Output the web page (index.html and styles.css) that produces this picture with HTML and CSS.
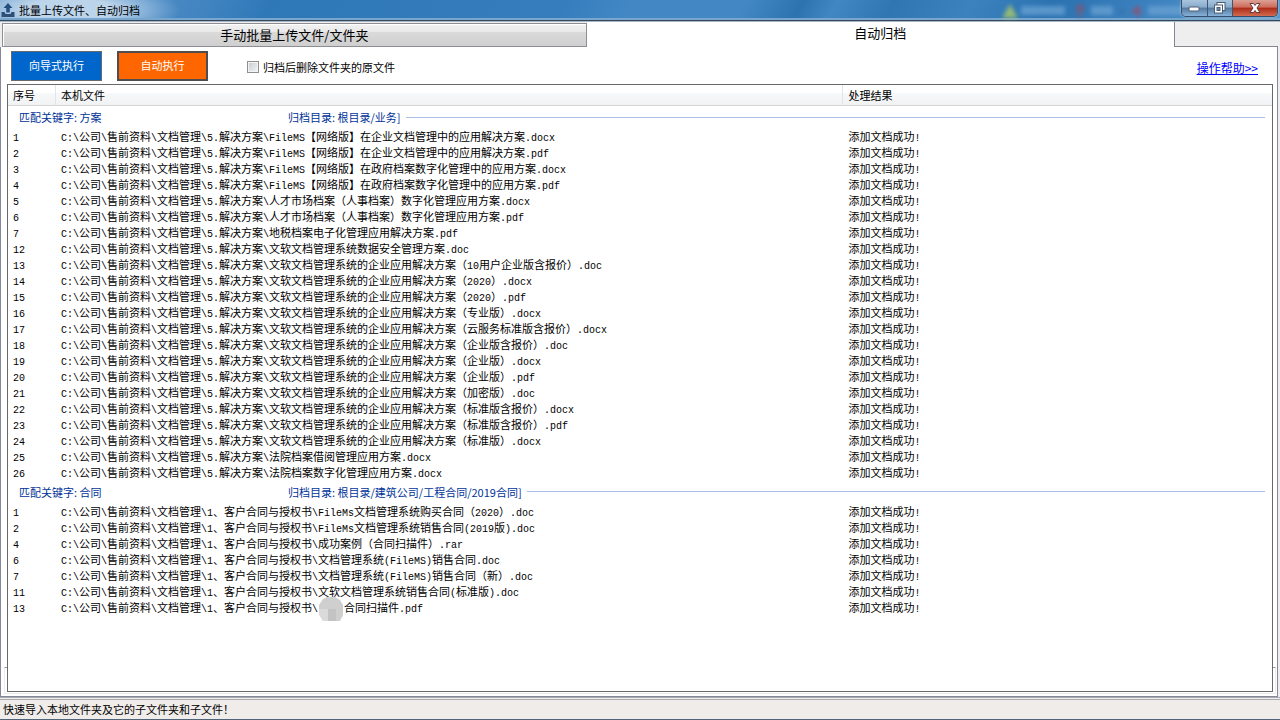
FILE: index.html
```html
<!DOCTYPE html>
<html lang="zh-CN">
<head>
<meta charset="utf-8">
<title>批量上传文件、自动归档</title>
<link rel="stylesheet" href="styles.css">
</head>
<body>
<header class="titlebar">
  <svg class="app-icon" width="16" height="16" viewBox="0 0 16 16" aria-hidden="true">
    <path d="M8 1 L12.5 6 H9.8 V10.5 H6.2 V6 H3.500 Z" fill="#24507f"/>
    <path d="M1.500 10 H4.500 L5.500 12 H10.500 L11.500 10 H14.500 V15 H1.500 Z" fill="#2d4f78"/>
  </svg>
  <h1 class="title">批量上传文件、自动归档</h1>
  <svg class="glass" width="190" height="20" viewBox="0 0 190 20" aria-hidden="true">
    <path d="M9 4 L17 18 H1 Z" fill="#b6cf62"/>
    <rect x="20" y="6" width="44" height="9" fill="#6aa2d2"/>
    <path d="M76 5 h7 v6 h-3 v6 h-3 v-6 h-2 z" fill="#8a526e"/>
    <rect x="90" y="6" width="22" height="9" fill="#6aa2d2"/>
    <rect x="118" y="10" width="6" height="3" fill="#3a6d9c"/>
    <path d="M130 11 l9 -6 v12 z" fill="#a04a62"/>
    <rect x="147" y="6" width="40" height="9" fill="#6aa2d2"/>
  </svg>
  <div class="window-buttons">
    <button class="win min" aria-label="最小化"><svg width="14" height="12" viewBox="0 0 14 12"><rect x="2" y="5" width="10" height="4" rx="1" fill="#fff" stroke="#4a5d74"/></svg></button>
    <button class="win max" aria-label="还原"><svg width="14" height="14" viewBox="0 0 14 14"><rect x="4" y="1.500" width="8" height="8" fill="#fff" stroke="#4a5d74"/><rect x="1.500" y="4" width="8" height="8" fill="#fff" stroke="#4a5d74"/><rect x="4" y="6.500" width="3" height="3" fill="#6a8bab" stroke="#4a5d74"/></svg></button>
    <button class="win close" aria-label="关闭"><svg width="14" height="12" viewBox="0 0 14 12"><path d="M2 1.500 H5.500 L7 3.500 L8.500 1.500 H12 L9 6 L12 10.500 H8.500 L7 8.500 L5.500 10.500 H2 L5 6 Z" fill="#fff" stroke="#65383c"/></svg></button>
  </div>
</header>

<nav class="tabs" role="tablist">
  <button class="tab" role="tab" aria-selected="false">手动批量上传文件/文件夹</button>
  <button class="tab active" role="tab" aria-selected="true">自动归档</button>
  <div class="tab-rest"></div>
</nav>

<main class="panel">
  <div class="toolbar">
    <button class="action blue">向导式执行</button>
    <button class="action orange">自动执行</button>
    <label class="check"><input type="checkbox"><span>归档后删除文件夹的原文件</span></label>
    <a class="help" href="#">操作帮助&gt;&gt;</a>
  </div>
  <div class="list">
    <table>
      <colgroup><col class="c-num"><col class="c-file"><col class="c-result"></colgroup>
      <thead><tr><th scope="col">序号</th><th scope="col">本机文件</th><th scope="col">处理结果</th></tr></thead>
      <tbody>
        <tr class="group"><th colspan="3" scope="rowgroup"><div class="group-line"><span class="key">匹配关键字: 方案</span><span>归档目录: 根目录/业务]</span><i class="rule"></i></div></th></tr>
        <tr><td><b>1</b></td><td><b>C:\</b>公司<b>\</b>售前资料<b>\</b>文档管理<b>\5.</b>解决方案<b>\FileMS</b>【网络版】在企业文档管理中的应用解决方案<b>.docx</b></td><td>添加文档成功<b>!</b></td></tr>
        <tr><td><b>2</b></td><td><b>C:\</b>公司<b>\</b>售前资料<b>\</b>文档管理<b>\5.</b>解决方案<b>\FileMS</b>【网络版】在企业文档管理中的应用解决方案<b>.pdf</b></td><td>添加文档成功<b>!</b></td></tr>
        <tr><td><b>3</b></td><td><b>C:\</b>公司<b>\</b>售前资料<b>\</b>文档管理<b>\5.</b>解决方案<b>\FileMS</b>【网络版】在政府档案数字化管理中的应用方案<b>.docx</b></td><td>添加文档成功<b>!</b></td></tr>
        <tr><td><b>4</b></td><td><b>C:\</b>公司<b>\</b>售前资料<b>\</b>文档管理<b>\5.</b>解决方案<b>\FileMS</b>【网络版】在政府档案数字化管理中的应用方案<b>.pdf</b></td><td>添加文档成功<b>!</b></td></tr>
        <tr><td><b>5</b></td><td><b>C:\</b>公司<b>\</b>售前资料<b>\</b>文档管理<b>\5.</b>解决方案<b>\</b>人才市场档案（人事档案）数字化管理应用方案<b>.docx</b></td><td>添加文档成功<b>!</b></td></tr>
        <tr><td><b>6</b></td><td><b>C:\</b>公司<b>\</b>售前资料<b>\</b>文档管理<b>\5.</b>解决方案<b>\</b>人才市场档案（人事档案）数字化管理应用方案<b>.pdf</b></td><td>添加文档成功<b>!</b></td></tr>
        <tr><td><b>7</b></td><td><b>C:\</b>公司<b>\</b>售前资料<b>\</b>文档管理<b>\5.</b>解决方案<b>\</b>地税档案电子化管理应用解决方案<b>.pdf</b></td><td>添加文档成功<b>!</b></td></tr>
        <tr><td><b>12</b></td><td><b>C:\</b>公司<b>\</b>售前资料<b>\</b>文档管理<b>\5.</b>解决方案<b>\</b>文软文档管理系统数据安全管理方案<b>.doc</b></td><td>添加文档成功<b>!</b></td></tr>
        <tr><td><b>13</b></td><td><b>C:\</b>公司<b>\</b>售前资料<b>\</b>文档管理<b>\5.</b>解决方案<b>\</b>文软文档管理系统的企业应用解决方案（<b>10</b>用户企业版含报价）<b>.doc</b></td><td>添加文档成功<b>!</b></td></tr>
        <tr><td><b>14</b></td><td><b>C:\</b>公司<b>\</b>售前资料<b>\</b>文档管理<b>\5.</b>解决方案<b>\</b>文软文档管理系统的企业应用解决方案（<b>2020</b>）<b>.docx</b></td><td>添加文档成功<b>!</b></td></tr>
        <tr><td><b>15</b></td><td><b>C:\</b>公司<b>\</b>售前资料<b>\</b>文档管理<b>\5.</b>解决方案<b>\</b>文软文档管理系统的企业应用解决方案（<b>2020</b>）<b>.pdf</b></td><td>添加文档成功<b>!</b></td></tr>
        <tr><td><b>16</b></td><td><b>C:\</b>公司<b>\</b>售前资料<b>\</b>文档管理<b>\5.</b>解决方案<b>\</b>文软文档管理系统的企业应用解决方案（专业版）<b>.docx</b></td><td>添加文档成功<b>!</b></td></tr>
        <tr><td><b>17</b></td><td><b>C:\</b>公司<b>\</b>售前资料<b>\</b>文档管理<b>\5.</b>解决方案<b>\</b>文软文档管理系统的企业应用解决方案（云服务标准版含报价）<b>.docx</b></td><td>添加文档成功<b>!</b></td></tr>
        <tr><td><b>18</b></td><td><b>C:\</b>公司<b>\</b>售前资料<b>\</b>文档管理<b>\5.</b>解决方案<b>\</b>文软文档管理系统的企业应用解决方案（企业版含报价）<b>.doc</b></td><td>添加文档成功<b>!</b></td></tr>
        <tr><td><b>19</b></td><td><b>C:\</b>公司<b>\</b>售前资料<b>\</b>文档管理<b>\5.</b>解决方案<b>\</b>文软文档管理系统的企业应用解决方案（企业版）<b>.docx</b></td><td>添加文档成功<b>!</b></td></tr>
        <tr><td><b>20</b></td><td><b>C:\</b>公司<b>\</b>售前资料<b>\</b>文档管理<b>\5.</b>解决方案<b>\</b>文软文档管理系统的企业应用解决方案（企业版）<b>.pdf</b></td><td>添加文档成功<b>!</b></td></tr>
        <tr><td><b>21</b></td><td><b>C:\</b>公司<b>\</b>售前资料<b>\</b>文档管理<b>\5.</b>解决方案<b>\</b>文软文档管理系统的企业应用解决方案（加密版）<b>.doc</b></td><td>添加文档成功<b>!</b></td></tr>
        <tr><td><b>22</b></td><td><b>C:\</b>公司<b>\</b>售前资料<b>\</b>文档管理<b>\5.</b>解决方案<b>\</b>文软文档管理系统的企业应用解决方案（标准版含报价）<b>.docx</b></td><td>添加文档成功<b>!</b></td></tr>
        <tr><td><b>23</b></td><td><b>C:\</b>公司<b>\</b>售前资料<b>\</b>文档管理<b>\5.</b>解决方案<b>\</b>文软文档管理系统的企业应用解决方案（标准版含报价）<b>.pdf</b></td><td>添加文档成功<b>!</b></td></tr>
        <tr><td><b>24</b></td><td><b>C:\</b>公司<b>\</b>售前资料<b>\</b>文档管理<b>\5.</b>解决方案<b>\</b>文软文档管理系统的企业应用解决方案（标准版）<b>.docx</b></td><td>添加文档成功<b>!</b></td></tr>
        <tr><td><b>25</b></td><td><b>C:\</b>公司<b>\</b>售前资料<b>\</b>文档管理<b>\5.</b>解决方案<b>\</b>法院档案借阅管理应用方案<b>.docx</b></td><td>添加文档成功<b>!</b></td></tr>
        <tr><td><b>26</b></td><td><b>C:\</b>公司<b>\</b>售前资料<b>\</b>文档管理<b>\5.</b>解决方案<b>\</b>法院档案数字化管理应用方案<b>.docx</b></td><td>添加文档成功<b>!</b></td></tr>
      </tbody>
      <tbody>
        <tr class="group"><th colspan="3" scope="rowgroup"><div class="group-line"><span class="key">匹配关键字: 合同</span><span>归档目录: 根目录/建筑公司/工程合同/2019合同]</span><i class="rule"></i></div></th></tr>
        <tr><td><b>1</b></td><td><b>C:\</b>公司<b>\</b>售前资料<b>\</b>文档管理<b>\1</b>、客户合同与授权书<b>\FileMs</b>文档管理系统购买合同（<b>2020</b>）<b>.doc</b></td><td>添加文档成功<b>!</b></td></tr>
        <tr><td><b>2</b></td><td><b>C:\</b>公司<b>\</b>售前资料<b>\</b>文档管理<b>\1</b>、客户合同与授权书<b>\FileMs</b>文档管理系统销售合同<b>(2019</b>版<b>).doc</b></td><td>添加文档成功<b>!</b></td></tr>
        <tr><td><b>4</b></td><td><b>C:\</b>公司<b>\</b>售前资料<b>\</b>文档管理<b>\1</b>、客户合同与授权书<b>\</b>成功案例（合同扫描件）<b>.rar</b></td><td>添加文档成功<b>!</b></td></tr>
        <tr><td><b>6</b></td><td><b>C:\</b>公司<b>\</b>售前资料<b>\</b>文档管理<b>\1</b>、客户合同与授权书<b>\</b>文档管理系统<b>(FileMS)</b>销售合同<b>.doc</b></td><td>添加文档成功<b>!</b></td></tr>
        <tr><td><b>7</b></td><td><b>C:\</b>公司<b>\</b>售前资料<b>\</b>文档管理<b>\1</b>、客户合同与授权书<b>\</b>文档管理系统<b>(FileMS)</b>销售合同（新）<b>.doc</b></td><td>添加文档成功<b>!</b></td></tr>
        <tr><td><b>11</b></td><td><b>C:\</b>公司<b>\</b>售前资料<b>\</b>文档管理<b>\1</b>、客户合同与授权书<b>\</b>文软文档管理系统销售合同<b>(</b>标准版<b>).doc</b></td><td>添加文档成功<b>!</b></td></tr>
        <tr><td><b>13</b></td><td><b>C:\</b>公司<b>\</b>售前资料<b>\</b>文档管理<b>\1</b>、客户合同与授权书<b>\</b><span class="masked"><svg width="26" height="26" viewBox="0 0 26 26" aria-hidden="true"><path d="M5 3 L9 1 H17 L22 4 L25 9 V19 L22 25 H5 L1 18 V9 Z" fill="#cfcfcf"/><path d="M10 13 H18 V25 H10 Z" fill="#c3c3c3"/><path d="M1 13 H10 V25 H5 L1 18 Z" fill="#dadada"/></svg></span>合同扫描件<b>.pdf</b></td><td>添加文档成功<b>!</b></td></tr>
      </tbody>
    </table>
  </div>
</main>
<footer class="status">快速导入本地文件夹及它的子文件夹和子文件！</footer>
</body>
</html>
```

FILE: styles.css
```css
* { box-sizing: border-box; }

body {
  margin: 0;
  min-height: 100vh;
  display: flex;
  flex-direction: column;
  background: #eeeeee;
  color: #000;
  font: 11px/16px "Noto Sans CJK SC", sans-serif;
}

button { font-family: inherit; }

.titlebar {
  display: flex;
  align-items: flex-start;
  height: 22px;
  border-bottom: 1px solid #a9b6c4;
  background:
    linear-gradient(to bottom, transparent 18px, #78a6cd 18px, #78a6cd 20px, #34495f 20px),
    radial-gradient(ellipse 110px 28px at 70px 10px, rgba(205, 224, 241, .85) 40%, transparent 100%),
    linear-gradient(118deg, #6d9fce 0, #3f83c0 190px, #2f78b8 240px, #357dbd 500px, #4388c5 560px, #4388c5 660px, #2c73b0 710px, #4087c4 740px, #2f76b3 790px, #3b82bf 860px, #2b72b0 930px, #3b80be 1010px, #5b97cb 100%);
}

.app-icon { flex: none; margin-top: 2px; }

.title {
  margin: 2px 0 0 3px;
  font-size: 11px;
  line-height: 16px;
  font-weight: 400;
}

.glass { margin-left: auto; margin-right: -10px; filter: blur(2px); opacity: .75; }

.window-buttons {
  display: flex;
  width: 97px;
  height: 17px;
  margin-right: 2px;
  border: 1px solid #364d67;
  border-top: 0;
  border-radius: 0 0 5px 5px;
  overflow: hidden;
  position: relative;
  box-shadow: 0 0 2px #d5e6f5;
}

.win {
  flex: 1;
  display: flex;
  align-items: center;
  justify-content: center;
  padding: 0;
  border: 0;
  border-right: 1px solid #40566f;
  background: linear-gradient(#a9c4dd, #88abcc 45%, #54799f 50%, #86b1d6);
}

.win.close {
  flex: 0 0 44px;
  border-right: 0;
  background: linear-gradient(#dda095, #cd6c5b 45%, #ac2b18 50%, #d26b50);
}

.tabs {
  display: flex;
  height: 25px;
}

.tab {
  flex: 0 0 calc(46% - 2px);
  border: 0;
  padding: 0;
  font-size: 13px;
  line-height: 20px;
  color: #000;
}

.tab:first-child {
  margin: 1px 0 0 2px;
  flex-basis: calc(46% - 4px);
  border: 1px solid #8c8e94;
  box-shadow: inset 1px 1px 0 #fff;
  background: linear-gradient(#f2f2f2, #e9e9e9 36%, #dadada 38%, #cfcfcf);
}

.tab.active { background: #fff; padding-bottom: 4px; }

.tab-rest {
  flex: 1;
  margin-right: 2px;
  border-left: 1px solid #85868f;
  border-bottom: 1px solid #85868f;
  background: #eeeeee;
}

.panel {
  position: relative;
  flex: 1;
  display: flex;
  flex-direction: column;
  margin-right: 2px;
  padding: 0 4px 4px 6px;
  border: 1px solid #85879a;
  border-top: 0;
  background: #fff;
}

/* lower edge of the group box behind the list */
.panel::before {
  content: "";
  position: absolute;
  left: 3px;
  right: 1px;
  bottom: 2px;
  height: 25px;
  border: 1px solid #ececec;
  border-top-color: #999;
}

.toolbar {
  display: flex;
  align-items: flex-start;
  height: 37px;
  padding: 4px 15px 0 4px;
}

.action {
  width: 91px;
  height: 30px;
  margin-right: 15px;
  padding: 0 0 2px;
  border: 1px solid #6a6a6a;
  color: #fff;
  font-size: 11px;
  line-height: 16px;
}

.action.blue { background: #0066cc; }
.action.orange { background: #ff6600; border: 2px solid #4e4e4e; }

.check {
  display: flex;
  align-items: center;
  gap: 4px;
  margin: 8px 0 0 24px;
}

.check input {
  appearance: none;
  width: 12px;
  height: 12px;
  margin: 0;
  border: 1px solid #8e8f8f;
  background: linear-gradient(135deg, #c6cad0, #f4f4f4);
  box-shadow: inset 0 0 0 1px #f4f4f4;
}

.help {
  margin: 9px 0 0 auto;
  color: #0000ff;
  font-size: 12px;
  line-height: 16px;
}

.list {
  position: relative;
  flex: 1;
  border: 1px solid #696969;
  background: #fff;
}

table {
  width: 100%;
  table-layout: fixed;
  border-collapse: separate;
  border-spacing: 0;
}

.c-num { width: 48px; }
.c-file { width: 62.3%; }

th, td {
  padding: 0 0 0 5px;
  text-align: left;
  font-weight: 400;
  white-space: nowrap;
}

td { height: 16px; line-height: 15px; }

thead th {
  height: 21px;
  border-bottom: 1px solid #d5d5d5;
  border-right: 1px solid #e3e4e6;
  background: linear-gradient(#fff 40%, #f7f8fa 42%, #f1f2f4);
}

thead th:last-child { border-right: 0; }

.group th { height: 22px; padding: 0 7px 0 11px; color: #003399; }
tbody + tbody .group th { height: 23px; }

.group-line { display: flex; align-items: center; }
.key { flex: 0 0 269px; }
.rule { flex: 1; height: 1px; margin-left: 5px; background: #a9bfe3; }

td b {
  font-family: "Liberation Mono", monospace;
  font-size: 10px;
  line-height: 1;
  font-weight: 400;
}

.masked {
  position: relative;
  display: inline-block;
  width: 26px;
  height: 10px;
}

.masked svg { position: absolute; left: 0; top: -6px; }

.status {
  height: 23px;
  padding: 1px 3px 0;
  border-top: 3px double #a9abb0;
  border-bottom: 1px solid #4f6478;
  background: #f0ecea;
}
```
